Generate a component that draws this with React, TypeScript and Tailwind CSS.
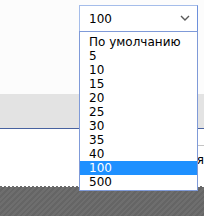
import React from "react";

const options = ["По умолчанию", "5", "10", "15", "20", "25", "30", "35", "40", "100", "500"];

export default function App() {
  return (
    <div className="relative w-[204px] h-[216px] overflow-hidden flex flex-col font-['DejaVu_Sans',sans-serif] text-[12px] text-black">
      <div className="h-[94px] bg-[#fcfcfc]" />
      <div className="h-[34px] bg-[#e3e3e3]" />
      <div className="h-px bg-[#4862a0]" />
      <div className="h-[57px] bg-white flex flex-col items-end">
        <div className="mt-[16px] w-[40px] border-t border-[#c4c4c4] pt-[8px] leading-[12px] text-right whitespace-nowrap">
          ия
        </div>
      </div>
      <div className="h-px bg-[repeating-linear-gradient(90deg,#6c6c6c_0px,#6c6c6c_2px,#ffffff_2px,#ffffff_4px)]" />
      <div className="flex-1 bg-[repeating-linear-gradient(135deg,#6e6e6e_0px,#6e6e6e_2px,#656565_2px,#656565_4px)]" />

      <div className="absolute left-[79px] top-[5px] w-[119px] flex flex-col">
        <div className="h-[27px] bg-white border border-[#a5bdea] border-r-[#6d90dc] flex items-center pl-[9px] pr-[7px]">
          <span className="flex-1 leading-none">100</span>
          <svg width="10" height="6" viewBox="0 0 10 6" className="mt-[-1px]">
            <path d="M1 1 L5 5 L9 1" fill="none" stroke="#5a5a5a" strokeWidth="1.4" />
          </svg>
        </div>
        <div className="-mt-px bg-white border border-[#7f9ad8] pt-[3px] pb-px">
          {options.map((o) => (
            <div
              key={o}
              className={
                o === "100"
                  ? "h-[14px] leading-[14px] pl-[9px] bg-[#1e90ff] text-white"
                  : "h-[14px] leading-[14px] pl-[9px]"
              }
            >
              {o}
            </div>
          ))}
        </div>
      </div>
    </div>
  );
}
